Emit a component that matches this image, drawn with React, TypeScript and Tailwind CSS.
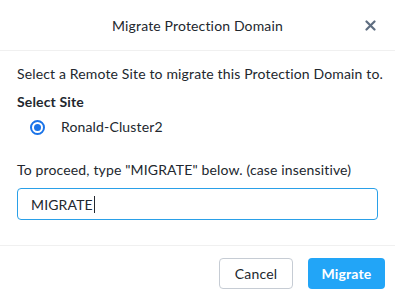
export default function App() {
  return (
    <div
      className="h-[300px] w-[395px] overflow-hidden bg-white tracking-[0.15px] text-[#22272e]"
      style={{ fontFamily: "Lato, 'Open Sans', sans-serif" }}
    >
      <div className="relative flex h-[51px] items-center justify-center border-b border-[#f0f0f0]">
        <h2 className="text-[14px]">Migrate Protection Domain</h2>
        <button className="absolute right-[19px] top-[20px] text-[#5e6d80]">
          <svg width="11" height="11" viewBox="0 0 11 11">
            <path d="M1.5 1.5 L9.5 9.5 M9.5 1.5 L1.5 9.5" stroke="currentColor" strokeWidth="2.2" strokeLinecap="round" />
          </svg>
        </button>
      </div>

      <div className="h-[195px] border-b border-[#f0f0f0] px-[17px] pt-[13px] text-[14px]">
        <p className="whitespace-nowrap leading-[20px]">Select a Remote Site to migrate this Protection Domain to.</p>
        <p className="mt-[8px] font-bold leading-[20px]">Select Site</p>
        <label className="mt-[5px] flex items-center gap-[16px] pl-[13px]">
          <span className="flex h-[15px] w-[15px] items-center justify-center rounded-full border-2 border-[#1a73e8]">
            <span className="h-[7px] w-[7px] rounded-full bg-[#1a73e8]" />
          </span>
          <span className="leading-[20px]">Ronald-Cluster2</span>
        </label>
        <p className="mt-[23px] whitespace-nowrap leading-[20px]">To proceed, type "MIGRATE" below. (case insensitive)</p>
        <div className="mt-[8px] flex h-[32px] items-center rounded-[4px] border border-[#2aa0e8] px-[13px]">
          <span>MIGRATE</span>
          <span className="ml-px h-[17px] w-px bg-[#22272e]" />
        </div>
      </div>

      <div className="flex justify-end gap-[15px] pr-[10px] pt-[12px]">
        <button className="h-[31px] w-[74px] rounded-[4px] border border-[#c6ccd4] text-[14px]">
          Cancel
        </button>
        <button className="h-[31px] w-[77px] rounded-[4px] bg-[#22a5f7] text-[14px] font-bold text-white">
          Migrate
        </button>
      </div>
    </div>
  );
}
